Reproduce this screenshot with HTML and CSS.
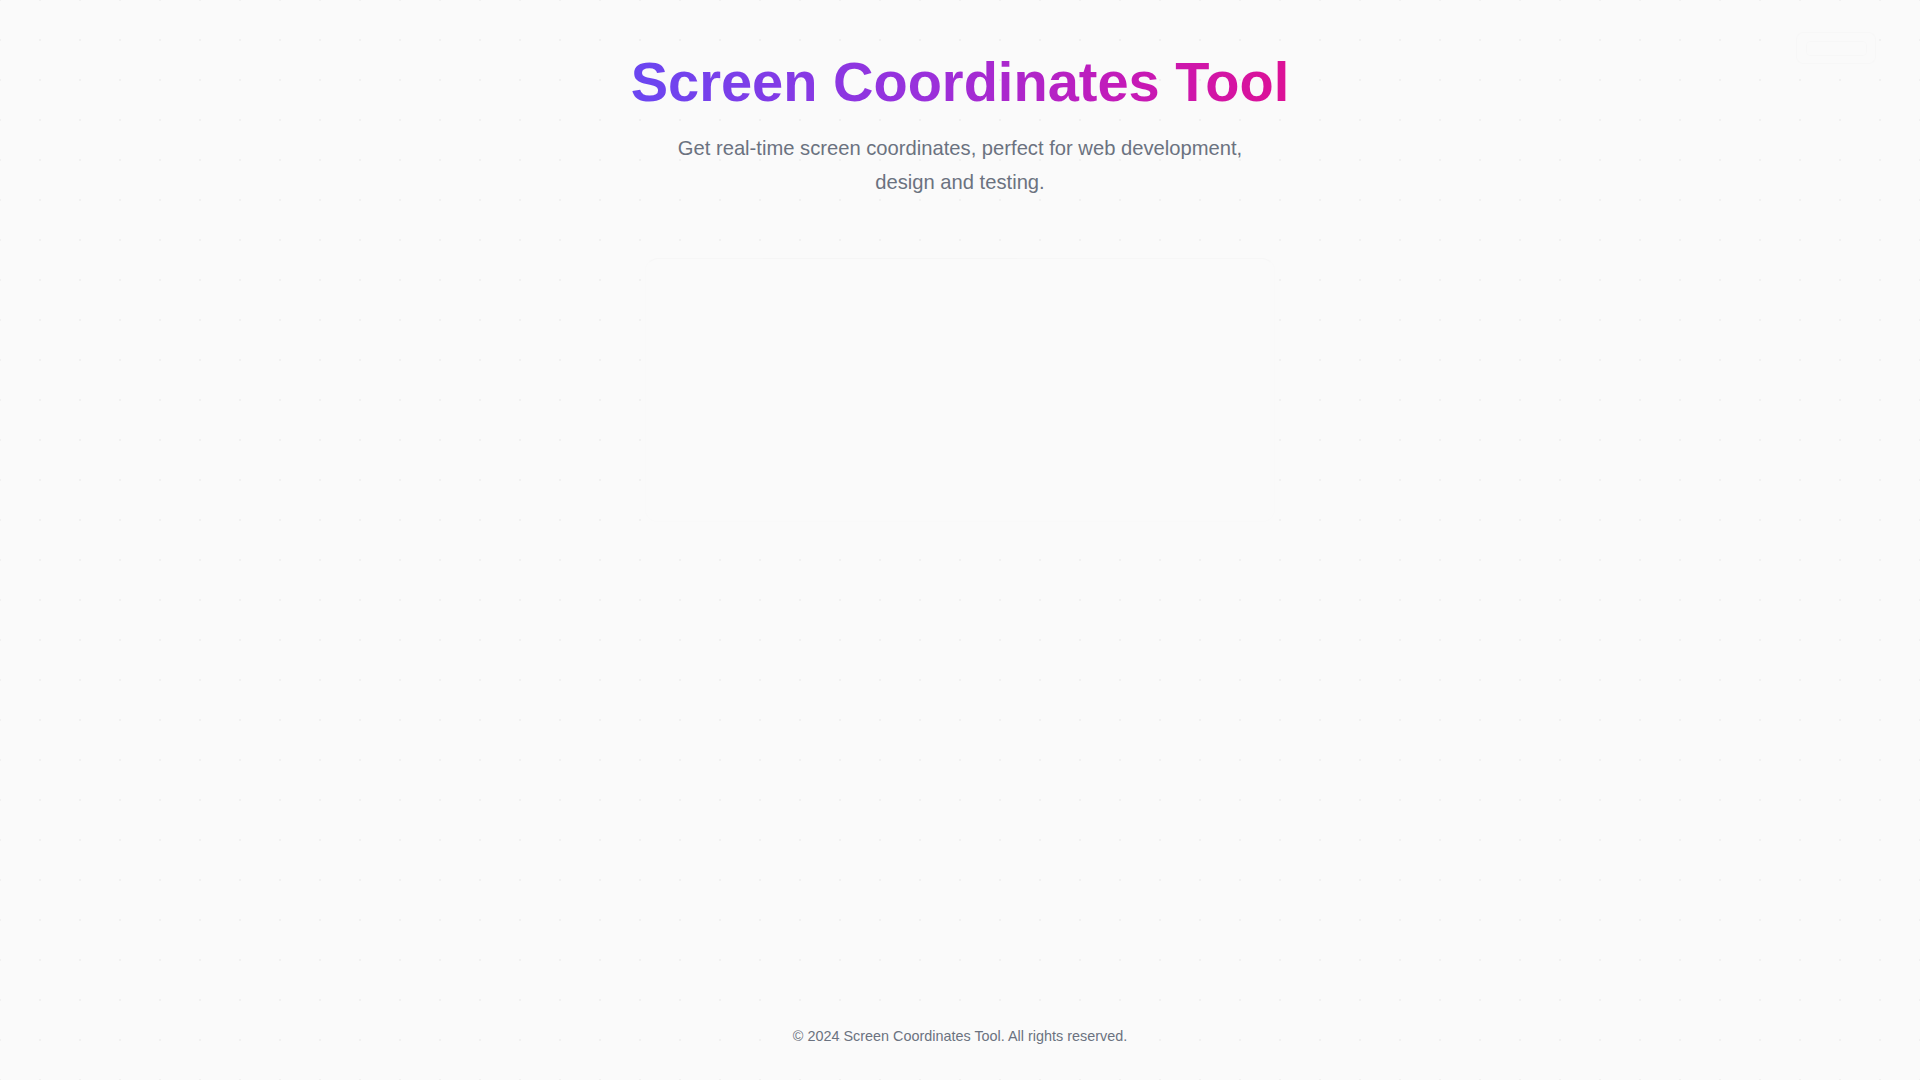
FILE: index.html
```html
<!DOCTYPE html>
<html lang="en">
<head>
<meta charset="utf-8">
<title>Screen Coordinates Tool</title>
<link rel="stylesheet" href="styles.css">
</head>
<body>
  <button class="top-toggle" type="button" aria-label="Toggle"><span class="toggle-pill"></span></button>
  <main class="main">
    <header class="hero">
      <h1 class="title">Screen Coordinates Tool</h1>
      <p class="subtitle">Get real-time screen coordinates, perfect for web development, design and testing.</p>
    </header>
    <section class="card" aria-label="Coordinates panel"></section>
  </main>
  <footer class="footer">© 2024 Screen Coordinates Tool. All rights reserved.</footer>
</body>
</html>
```

FILE: styles.css
```css
* { box-sizing: border-box; }
html, body { margin: 0; padding: 0; }
body {
  min-height: 100vh;
  display: flex;
  flex-direction: column;
  font-family: "Liberation Sans", Arial, sans-serif;
  background-color: #fafafa;
  background-image: radial-gradient(circle, #f1f1f1 0.9px, transparent 1.4px);
  background-size: 40px 40px;
  background-position: -20px -20px;
  color: #374151;
}
.main {
  flex: 1;
  display: flex;
  flex-direction: column;
  align-items: center;
  padding-top: 48px;
}
.hero {
  display: flex;
  flex-direction: column;
  align-items: center;
  text-align: center;
}
.title {
  margin: 0 0 15px;
  font-size: 56px;
  font-weight: 700;
  line-height: 68px;
  background: linear-gradient(90deg, #6a46f1 0%, #9a30db 45%, #c41ab8 75%, #dd1196 100%);
  -webkit-background-clip: text;
  background-clip: text;
  color: transparent;
}
.subtitle {
  margin: 0;
  max-width: 600px;
  font-size: 20.2px;
  line-height: 34px;
  color: #6b7280;
}
.card {
  margin-top: 59px;
  width: 630px;
  height: 264px;
  border-radius: 14px;
  background: #fafafa;
  border: 1px solid rgba(0, 0, 0, 0.004);
  border-top-color: rgba(0, 0, 0, 0.014);
}
.footer {
  padding: 30px 0 34px;
  text-align: center;
  font-size: 14.4px;
  line-height: 20px;
  color: #6b7280;
}
.top-toggle {
  position: absolute;
  top: 32px;
  right: 44px;
  width: 80px;
  height: 32px;
  padding: 0;
  border: 1px solid rgba(0, 0, 0, 0.01);
  border-radius: 8px;
  background: #fafafa;
  display: flex;
  align-items: center;
  justify-content: center;
}
.toggle-pill {
  display: block;
  width: 61px;
  height: 15px;
  border-radius: 4px;
  border: 1px solid rgba(0, 0, 0, 0.012);
}
```
